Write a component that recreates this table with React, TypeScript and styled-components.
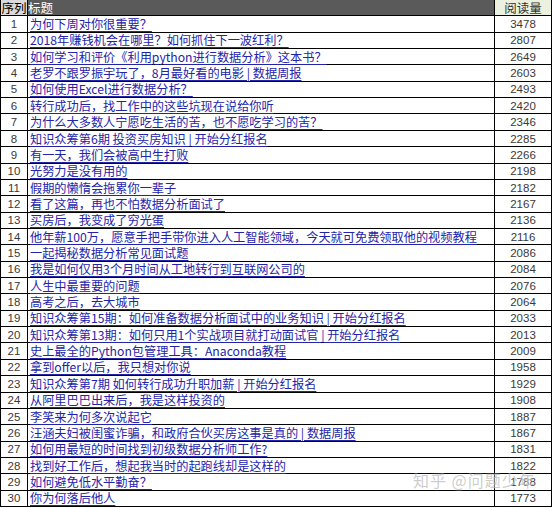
import React from "react"
import styled, { createGlobalStyle } from "styled-components"

const rows: [string, number][] = [
  ["为何下周对你很重要？", 3478],
  ["2018年赚钱机会在哪里？如何抓住下一波红利？", 2807],
  ["如何学习和评价《利用python进行数据分析》这本书？", 2649],
  ["老罗不跟罗振宇玩了，8月最好看的电影 | 数据周报", 2603],
  ["如何使用Excel进行数据分析？", 2493],
  ["转行成功后，找工作中的这些坑现在说给你听", 2420],
  ["为什么大多数人宁愿吃生活的苦，也不愿吃学习的苦？", 2346],
  ["知识众筹第6期 投资买房知识 | 开始分红报名", 2285],
  ["有一天，我们会被高中生打败", 2266],
  ["光努力是没有用的", 2198],
  ["假期的懒惰会拖累你一辈子", 2182],
  ["看了这篇，再也不怕数据分析面试了", 2167],
  ["买房后，我变成了穷光蛋", 2136],
  ["他年薪100万，愿意手把手带你进入人工智能领域，今天就可免费领取他的视频教程", 2116],
  ["一起揭秘数据分析常见面试题", 2086],
  ["我是如何仅用3个月时间从工地转行到互联网公司的", 2084],
  ["人生中最重要的问题", 2076],
  ["高考之后，去大城市", 2064],
  ["知识众筹第15期：如何准备数据分析面试中的业务知识 | 开始分红报名", 2033],
  ["知识众筹第13期：如何只用1个实战项目就打动面试官 | 开始分红报名", 2013],
  ["史上最全的Python包管理工具：Anaconda教程", 2009],
  ["拿到offer以后，我只想对你说", 1958],
  ["知识众筹第7期 如何转行成功升职加薪 | 开始分红报名", 1929],
  ["从阿里巴巴出来后，我是这样投资的", 1908],
  ["李笑来为何多次说起它", 1887],
  ["汪涵夫妇被闺蜜诈骗，和政府合伙买房这事是真的 | 数据周报", 1867],
  ["如何用最短的时间找到初级数据分析师工作?", 1831],
  ["找到好工作后，想起我当时的起跑线却是这样的", 1822],
  ["如何避免低水平勤奋？", 1788],
  ["你为何落后他人", 1773],
]

const GlobalStyle = createGlobalStyle`
  html, body {
    margin: 0;
    padding: 0;
    background: #ffffff;
    overflow: hidden;
  }
  body {
    font-family: "Noto Sans CJK SC", "Liberation Sans", sans-serif;
  }
`

const Sheet = styled.div`
  position: relative;
  width: 552px;
  height: 507px;
  display: grid;
  grid-template-rows: repeat(31, 1fr);
  border-right: 1px solid #000;
  box-sizing: border-box;
`

const Row = styled.div`
  display: grid;
  grid-template-columns: 27px 467px 57px;
  border-bottom: 1px solid #000;
  min-height: 0;
`

const Cell = styled.div<{ $bg?: string; $color?: string; $align?: string }>`
  display: flex;
  align-items: center;
  justify-content: ${(p) => p.$align || "center"};
  border-left: 1px solid #000;
  background: ${(p) => p.$bg || "#fff"};
  color: ${(p) => p.$color || "#333"};
  white-space: nowrap;
  min-width: 0;
  box-sizing: border-box;
`

const HeadText = styled.span`
  font-family: "Noto Sans CJK SC", sans-serif;
  font-size: 12.5px;
  line-height: 12px;
`

const Num = styled.span`
  font-family: "Liberation Sans", Arial, sans-serif;
  font-size: 11.5px;
  line-height: 12px;
  color: #3a3a3a;
`

const Title = styled.a`
  font-family: "Noto Sans CJK SC", sans-serif;
  font-size: 12.2px;
  line-height: 12px;
  color: #2424aa;
  text-decoration: underline;
  text-underline-offset: 2px;
  padding-left: 2px;
  padding-right: 4px;
  cursor: pointer;
`

const Watermark = styled.div`
  position: absolute;
  left: 413px;
  top: 470px;
  font-family: "Noto Sans CJK SC", sans-serif;
  font-size: 16px;
  line-height: 20px;
  letter-spacing: 1px;
  color: rgba(160, 160, 160, 0.55);
  text-shadow: 0 0 2px rgba(255, 255, 255, 0.9);
  pointer-events: none;
  white-space: nowrap;
`

const App = () => {
  return (
    <>
      <GlobalStyle />
      <Sheet>
        <Row>
          <Cell $bg="#dadada" $color="#000">
            <HeadText>序列</HeadText>
          </Cell>
          <Cell $bg="#5a5a5a" $color="#fff" $align="flex-start">
            <HeadText>标题</HeadText>
          </Cell>
          <Cell $bg="#ebf1de" $color="#333">
            <HeadText>阅读量</HeadText>
          </Cell>
        </Row>
        {rows.map(([title, views], i) => (
          <Row key={i}>
            <Cell>
              <Num>{i + 1}</Num>
            </Cell>
            <Cell $align="flex-start">
              <Title>{title}</Title>
            </Cell>
            <Cell>
              <Num>{views}</Num>
            </Cell>
          </Row>
        ))}
        <Watermark>知乎 @问题少年</Watermark>
      </Sheet>
    </>
  )
}

export default App
